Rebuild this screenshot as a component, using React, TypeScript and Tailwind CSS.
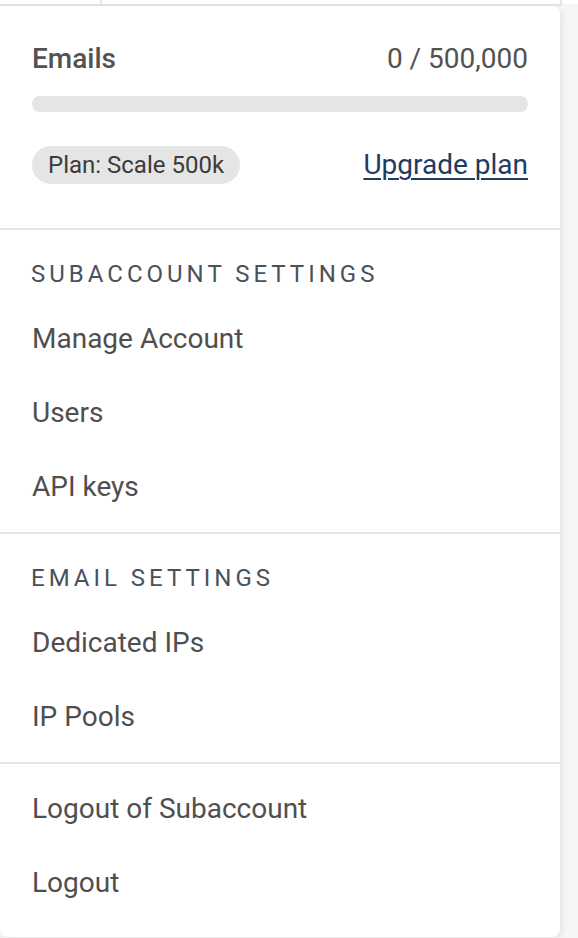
const subaccountLinks = ["Manage Account", "Users", "API keys"];
const emailLinks = ["Dedicated IPs", "IP Pools"];
const accountLinks = ["Logout of Subaccount", "Logout"];

function MenuItem({ label }: { label: string }) {
  return (
    <a href="#" className="block px-8 py-[23px] text-[28px] leading-[28px] text-[#4f4f4f]">
      {label}
    </a>
  );
}

function SectionHeading({ title }: { title: string }) {
  return (
    <div className="px-[31px] pt-[28px] mb-[12px] text-[24px] leading-[32px] tracking-[4px] text-[#48525c]">
      {title}
    </div>
  );
}

export default function App() {
  return (
    <div
      className="min-h-[938px] w-[578px] bg-[#f5f6f8] overflow-hidden"
      style={{ fontFamily: "Roboto, 'Noto Sans', sans-serif" }}
    >
      {/* top strip of the page behind the menu */}
      <div className="flex h-[4px] bg-white">
        <div className="w-[102px] border-r-2 border-[#e4e4e4]" />
        <div className="w-[460px] border-r-2 border-[#e4e4e4]" />
      </div>
      <div className="h-[2px] w-[562px] bg-[#e4e4e4]" />

      <div className="w-[560px] bg-white rounded-tr-[8px] rounded-b-[8px] shadow-[2px_2px_6px_rgba(0,0,0,0.08)]">
        {/* usage */}
        <div className="px-8 pt-[37px] pb-[44px] border-b-2 border-[#e6e6e6]">
          <div className="flex items-center justify-between h-[32px]">
            <span className="text-[28px] font-medium text-[#525252]">Emails</span>
            <span className="text-[28px] text-[#525252]">0 / 500,000</span>
          </div>
          <div className="mt-[21px] h-[16px] rounded-full bg-[#e5e5e5]" />
          <div className="mt-[34px] flex items-center justify-between h-[38px]">
            <span className="rounded-full bg-[#e5e5e5] px-[16px] h-[38px] flex items-center text-[24px] text-[#3b3b3b]">
              Plan: Scale 500k
            </span>
            <a href="#" className="text-[28px] leading-[38px] text-[#1f3b63] underline underline-offset-[4px] decoration-[2px]">
              Upgrade plan
            </a>
          </div>
        </div>

        {/* subaccount */}
        <div className="pb-[8px] border-b-2 border-[#e6e6e6]">
          <SectionHeading title="SUBACCOUNT SETTINGS" />
          {subaccountLinks.map((l) => (
            <MenuItem key={l} label={l} />
          ))}
        </div>

        {/* email */}
        <div className="pb-[8px] border-b-2 border-[#e6e6e6]">
          <SectionHeading title="EMAIL SETTINGS" />
          {emailLinks.map((l) => (
            <MenuItem key={l} label={l} />
          ))}
        </div>

        <div className="pt-[8px] pb-[17px]">
          {accountLinks.map((l) => (
            <MenuItem key={l} label={l} />
          ))}
        </div>
      </div>
    </div>
  );
}
